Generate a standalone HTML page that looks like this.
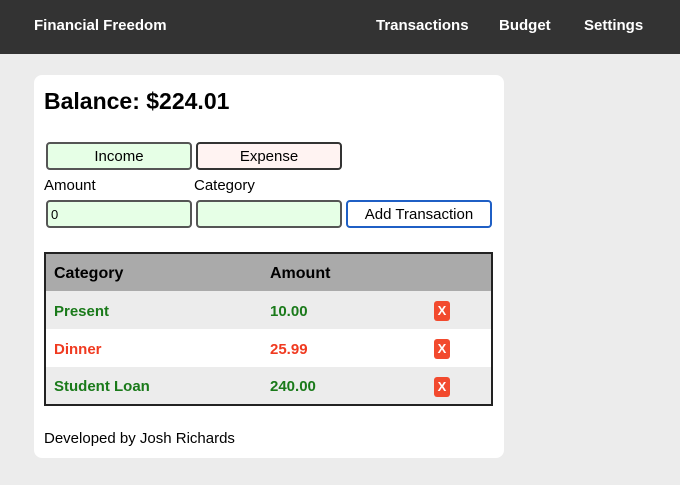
<!DOCTYPE html>
<html><head><style>
*{box-sizing:border-box;margin:0;padding:0}
body{width:680px;height:485px;background:#ececec;font-family:"Liberation Sans",sans-serif;position:relative;overflow:hidden}
.nav{height:54px;background:#333;color:#fff;font-size:15px;font-weight:bold;position:relative}
.nav span{position:absolute;top:17px}
.card{position:absolute;left:34px;top:75px;width:470px;height:383px;background:#fff;border-radius:8px}
h1{position:absolute;left:10px;top:13px;font-size:23px;font-weight:bold}
.btn{position:absolute;height:28px;border:2px solid #555;border-radius:4px;text-align:center;font-size:15px;line-height:26px}
.lbl{position:absolute;font-size:15px}
table{position:absolute;left:10px;top:177px;width:449px;border:2px solid #222;border-collapse:collapse;font-size:15px;font-weight:bold}
td{height:38px;padding-left:8px;padding-top:2px}
.x{display:inline-block;width:16px;height:20px;background:#f24a2e;color:#fff;border-radius:3px;text-align:center;line-height:20px;font-size:13px}
</style></head><body>
<div class="nav"><span style="left:34px">Financial Freedom</span><span style="left:376px">Transactions</span><span style="left:499px">Budget</span><span style="left:584px">Settings</span></div>
<div class="card">
<h1>Balance: $224.01</h1>
<div class="btn" style="left:12px;top:67px;width:146px;background:#e6ffe6">Income</div>
<div class="btn" style="left:162px;top:67px;width:146px;background:#fff3f2;border-color:#333">Expense</div>
<div class="lbl" style="left:10px;top:102px">Amount</div>
<div class="lbl" style="left:160px;top:102px">Category</div>
<div class="btn" style="left:12px;top:125px;width:146px;background:#e6ffe6;text-align:left;padding-left:3px;font-size:13px">0</div>
<div class="btn" style="left:162px;top:125px;width:146px;background:#e6ffe6"></div>
<div class="btn" style="left:312px;top:125px;width:146px;background:#fff;border-color:#1f5fc5">Add Transaction</div>
<table>
<tr style="background:#aaa;color:#000;font-size:16px"><td style="width:217px">Category</td><td style="width:164px">Amount</td><td></td></tr>
<tr style="background:#ececec;color:#1a7a1a"><td>Present</td><td>10.00</td><td><span class="x">X</span></td></tr>
<tr style="background:#fff;color:#f03a20"><td>Dinner</td><td>25.99</td><td><span class="x">X</span></td></tr>
<tr style="background:#ececec;color:#1a7a1a"><td>Student Loan</td><td>240.00</td><td><span class="x">X</span></td></tr>
</table>
<div class="lbl" style="left:10px;top:355px">Developed by Josh Richards</div>
</div>
</body></html>
